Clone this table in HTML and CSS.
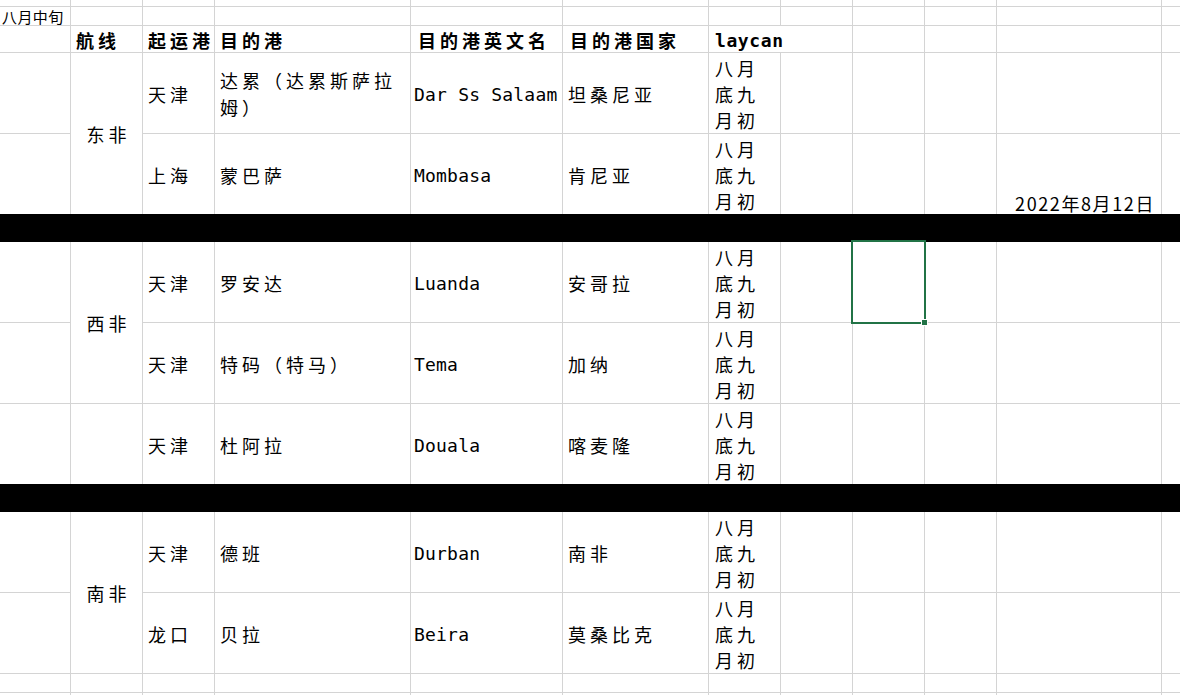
FILE: index.html
```html
<!DOCTYPE html>
<html lang="zh-CN">
<head>
<meta charset="utf-8">
<title>八月中旬</title>
<link rel="stylesheet" href="styles.css">
</head>
<body>
<div class="sheet">
  <!-- row 0 (partial) -->
  <div class="c"></div><div class="c"></div><div class="c"></div><div class="c"></div><div class="c"></div><div class="c"></div><div class="c"></div><div class="c"></div><div class="c"></div><div class="c"></div><div class="c"></div><div class="c"></div>
  <!-- row 1 -->
  <div class="c note">八月中旬</div><div class="c"></div><div class="c"></div><div class="c"></div><div class="c"></div><div class="c"></div><div class="c"></div><div class="c"></div><div class="c"></div><div class="c"></div><div class="c"></div><div class="c"></div>
  <!-- row 2 header -->
  <div class="c"></div>
  <div class="c h">航线</div>
  <div class="c h">起运港</div>
  <div class="c h">目的港</div>
  <div class="c h h-wide">目的港英文名</div>
  <div class="c h h-wide">目的港国家</div>
  <div class="c h lay-h">laycan</div>
  <div class="c"></div><div class="c"></div><div class="c"></div><div class="c"></div>
  <!-- row 3 -->
  <div class="c"></div>
  <div class="c t region">东非</div>
  <div class="c t">天津</div>
  <div class="c t">达累（达累斯萨拉姆）</div>
  <div class="c t en">Dar Ss Salaam</div>
  <div class="c t">坦桑尼亚</div>
  <div class="c t lay">八月<br>底九<br>月初</div>
  <div class="c"></div><div class="c"></div><div class="c"></div><div class="c"></div><div class="c"></div>
  <!-- row 4 -->
  <div class="c"></div>
  <div class="c t">上海</div>
  <div class="c t">蒙巴萨</div>
  <div class="c t en">Mombasa</div>
  <div class="c t">肯尼亚</div>
  <div class="c t lay">八月<br>底九<br>月初</div>
  <div class="c"></div><div class="c"></div><div class="c"></div>
  <div class="c date">2022年8月12日</div>
  <div class="c"></div>
  <!-- row 5 black -->
  <div class="bar"></div>
  <!-- row 6 -->
  <div class="c"></div>
  <div class="c t region">西非</div>
  <div class="c t">天津</div>
  <div class="c t">罗安达</div>
  <div class="c t en">Luanda</div>
  <div class="c t">安哥拉</div>
  <div class="c t lay">八月<br>底九<br>月初</div>
  <div class="c"></div>
  <div class="c sel"><span class="sel-box"></span><span class="sel-handle"></span></div>
  <div class="c"></div><div class="c"></div><div class="c"></div>
  <!-- row 7 -->
  <div class="c"></div>
  <div class="c t">天津</div>
  <div class="c t">特码（特马）</div>
  <div class="c t en">Tema</div>
  <div class="c t">加纳</div>
  <div class="c t lay">八月<br>底九<br>月初</div>
  <div class="c"></div><div class="c"></div><div class="c"></div><div class="c"></div><div class="c"></div>
  <!-- row 8 -->
  <div class="c"></div>
  <div class="c"></div>
  <div class="c t">天津</div>
  <div class="c t">杜阿拉</div>
  <div class="c t en">Douala</div>
  <div class="c t">喀麦隆</div>
  <div class="c t lay">八月<br>底九<br>月初</div>
  <div class="c"></div><div class="c"></div><div class="c"></div><div class="c"></div><div class="c"></div>
  <!-- row 9 black -->
  <div class="bar"></div>
  <!-- row 10 -->
  <div class="c"></div>
  <div class="c t region">南非</div>
  <div class="c t">天津</div>
  <div class="c t">德班</div>
  <div class="c t en">Durban</div>
  <div class="c t">南非</div>
  <div class="c t lay">八月<br>底九<br>月初</div>
  <div class="c"></div><div class="c"></div><div class="c"></div><div class="c"></div><div class="c"></div>
  <!-- row 11 -->
  <div class="c"></div>
  <div class="c t">龙口</div>
  <div class="c t">贝拉</div>
  <div class="c t en">Beira</div>
  <div class="c t">莫桑比克</div>
  <div class="c t lay">八月<br>底九<br>月初</div>
  <div class="c"></div><div class="c"></div><div class="c"></div><div class="c"></div><div class="c"></div>
  <!-- row 12 -->
  <div class="c"></div><div class="c"></div><div class="c"></div><div class="c"></div><div class="c"></div><div class="c"></div><div class="c"></div><div class="c"></div><div class="c"></div><div class="c"></div><div class="c"></div><div class="c"></div>
  <!-- row 13 -->
  <div class="c"></div><div class="c"></div><div class="c"></div><div class="c"></div><div class="c"></div><div class="c"></div><div class="c"></div><div class="c"></div><div class="c"></div><div class="c"></div><div class="c"></div><div class="c"></div>
</div>
</body>
</html>
```
FILE: styles.css
```css
html, body {
  margin: 0;
  padding: 0;
  background: #ffffff;
}

body {
  width: 1180px;
  height: 695px;
  overflow: hidden;
  color: #000000;
  font-family: "Noto Sans CJK SC", sans-serif;
}

.sheet {
  display: grid;
  width: 1180px;
  height: 695px;
  overflow: hidden;
  grid-template-columns: 70px 71px 71px 195px 151px 145px 71px 71px 71px 71px 164px 1fr;
  grid-template-rows: 6px 18px 26px 80px 80px 26px 80px 80px 80px 26px 80px 80px 18px 18px;
  gap: 1px;
  background: #d4d4d4;
}

.c {
  background: #ffffff;
  min-width: 0;
  min-height: 0;
}

.note {
  display: flex;
  align-items: center;
  padding: 1px 0 0 2px;
  font-size: 15px;
  line-height: 18px;
  letter-spacing: 0.4px;
  white-space: nowrap;
}

.h {
  display: flex;
  align-items: center;
  padding: 2px 0 0 5px;
  font-size: 18px;
  line-height: 27px;
  font-weight: 700;
  letter-spacing: 4px;
  white-space: nowrap;
}

.h-wide {
  padding-left: 7px;
}

.lay-h {
  grid-column: span 2;
  padding-left: 6px;
  font-family: "DejaVu Sans Mono", monospace;
  letter-spacing: 0.6px;
}

.t {
  display: flex;
  align-items: center;
  padding: 2px 2px 0 5px;
  font-size: 18px;
  line-height: 27px;
  letter-spacing: 4px;
}

.region {
  grid-row: span 2;
  justify-content: center;
  padding-left: 4px;
  padding-right: 0;
}

.en {
  padding-top: 3px;
  padding-left: 3px;
  font-family: "DejaVu Sans Mono", monospace;
  letter-spacing: 0.2px;
  white-space: nowrap;
}

.lay {
  line-height: 26px;
  padding-left: 6px;
}

.date {
  display: flex;
  justify-content: flex-end;
  align-items: flex-end;
  padding: 0 6px 1px 0;
  font-size: 18px;
  line-height: 20px;
  letter-spacing: 1.6px;
  white-space: nowrap;
}

.bar {
  grid-column: 1 / -1;
  background: #000000;
  box-shadow: 0 -1px 0 #000000, 0 1px 0 #000000;
}

.sel {
  position: relative;
}

.sel-box {
  position: absolute;
  top: -2px;
  left: -2px;
  right: -2px;
  bottom: -2px;
  border: 2px solid #217346;
  z-index: 2;
}

.sel-handle {
  position: absolute;
  left: 68px;
  top: 77px;
  width: 5px;
  height: 5px;
  background: #217346;
  border: 1px solid #ffffff;
  z-index: 3;
}
```
